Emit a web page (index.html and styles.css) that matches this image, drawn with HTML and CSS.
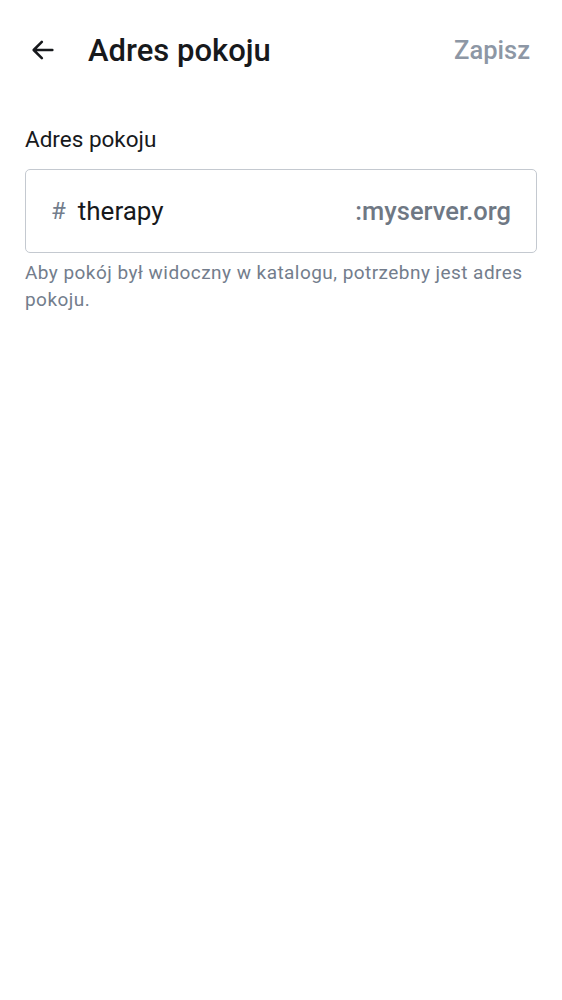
FILE: index.html
```html
<!DOCTYPE html>
<html lang="pl">
<head>
<meta charset="utf-8">
<link rel="stylesheet" href="styles.css">
</head>
<body>
<header class="bar">
  <button class="back" aria-label="Wstecz">
    <svg width="28" height="28" viewBox="0 0 24 24"><path d="M20 12H4.5M11 5l-7 7 7 7" fill="none" stroke="#17191c" stroke-width="2.2" stroke-linecap="round" stroke-linejoin="round"/></svg>
  </button>
  <h1 class="title">Adres pokoju</h1>
  <span class="save">Zapisz</span>
</header>
<main class="content">
  <label class="label">Adres pokoju</label>
  <div class="field">
    <span class="hash">#</span>
    <span class="local">therapy</span>
    <span class="server">:myserver.org</span>
  </div>
  <p class="help">Aby pokój był widoczny w katalogu, potrzebny jest adres pokoju.</p>
</main>
</body>
</html>
```
FILE: styles.css
```css
html, body { margin: 0; padding: 0; background: #fff; }
body { font-family: Roboto, "Noto Sans", sans-serif; color: #17191c; }
.bar { display: flex; align-items: center; height: 100px; padding: 0 32px 0 26px; }
.back { border: 0; background: none; padding: 0; width: 34px; height: 34px; display: flex; align-items: center; justify-content: center; margin-right: 28px; }
.title { flex: 1; margin: 0; font-size: 31px; font-weight: 500; letter-spacing: 0; }
.save { font-size: 25.5px; font-weight: 500; color: #8d97a5; }
.content { padding: 23px 25px 0 25px; }
.label { display: block; font-size: 22.5px; line-height: 32px; margin-bottom: 14px; }
.field { display: flex; align-items: center; height: 82px; border: 1px solid #c4c9d0; border-radius: 5px; padding: 0 25px 0 25px; font-size: 26px; }
.hash { color: #737d8c; margin-right: 12px; font-size: 24px; }
.local { flex: 1; color: #17191c; }
.server { color: #6f7884; font-weight: 500; font-size: 25.5px; }
.help { margin: 6px 0 0; font-size: 19px; line-height: 27px; color: #737d8c; letter-spacing: 0.45px; }
```
